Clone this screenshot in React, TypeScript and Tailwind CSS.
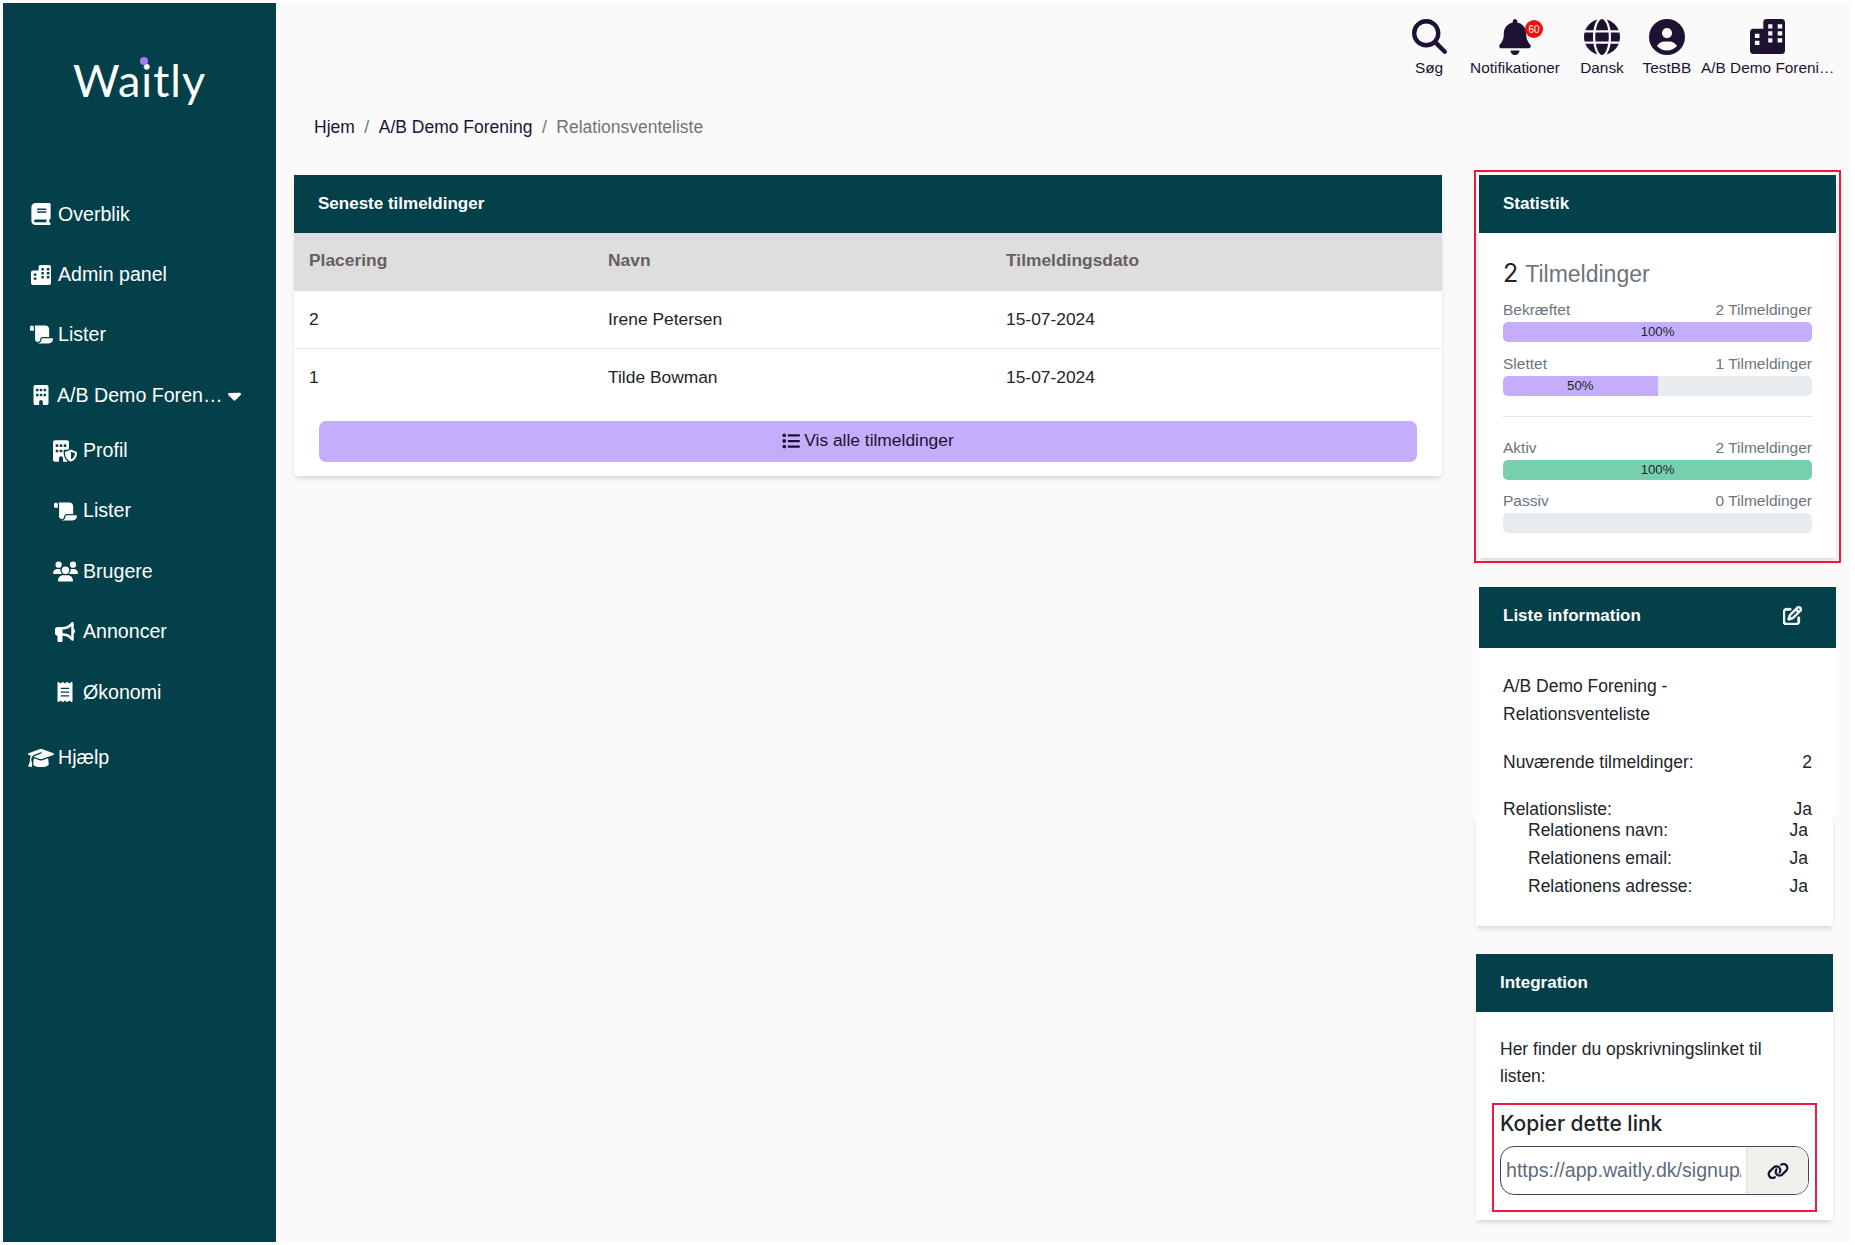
import { FaBook, FaScroll, FaBuilding, FaBuildingShield, FaUsers, FaBullhorn, FaReceipt, FaGraduationCap, FaMagnifyingGlass, FaBell, FaGlobe, FaCircleUser, FaRegPenToSquare, FaLink, FaList, FaCaretDown } from 'react-icons/fa6';

// two block building used for admin panel and the association menu
const CityIcon = ({ className }: { className: string }) => (
  <svg viewBox="0 0 100 100" className={className} fill="currentColor">
    <path
      fillRule="evenodd"
      d="M38 9Q38 0 47 0H90Q100 0 100 10V90Q100 100 90 100H10Q0 100 0 90V38Q0 28 10 28H38ZM52 15V27H64V15ZM79 15V27H92V15ZM52 35V47H64V35ZM79 35V47H92V35ZM52 55V67H64V55ZM79 55V67H92V55ZM14 42V54H27V42ZM14 62V74H27V62Z"
    />
  </svg>
);

const topItems = [
  { label: 'Søg', icon: <FaMagnifyingGlass className="text-[35px]" />, w: 'w-[66px]', text: 'text-center' },
  { label: 'Notifikationer', icon: <FaBell className="text-[36px]" />, w: 'w-[106px]', text: 'text-center', badge: true },
  { label: 'Dansk', icon: <FaGlobe className="text-[36px]" />, w: 'w-[68px]', text: 'text-center' },
  { label: 'TestBB', icon: <FaCircleUser className="text-[36px]" />, w: 'w-[62px]', text: 'text-center' },
  { label: 'A/B Demo Foreningen', icon: <CityIcon className="w-[35px] h-[35px]" />, w: 'w-[138px]', text: 'pl-[3px]' },
];

const Row = ({ icon, label, sub }: { icon: React.ReactNode; label: string; sub?: boolean }) => (
  <div className={`flex items-center h-[60.4px] text-[19.6px] text-white ${sub ? 'pl-[49px]' : 'pl-[25px]'}`}>
    <span className={`w-[26px] flex justify-center ${sub ? 'mr-[5px]' : 'mr-[4px]'}`}>{icon}</span>
    {label}
  </div>
);

const CardHead = ({ title }: { title: string }) => (
  <div className="h-[58px] bg-[#03404a] text-white font-bold text-[17px] pl-6 flex items-center">
    {title}
  </div>
);

const Stat = ({ label, count, pct, color }: { label: string; count: number; pct: number; color: string }) => (
  <div className="mb-[10.5px]">
    <div className="flex justify-between text-[15.5px] leading-[22px] text-[#6c757d]">
      <span>{label}</span>
      <span>{count} Tilmeldinger</span>
    </div>
    <div className="h-5 mt-[1px] rounded-[5px] bg-[#e9ecef] overflow-hidden flex">
      {pct > 0 && (
        <div className={`${color} flex items-center justify-center text-[13.2px] text-[#212529]`} style={{ width: `${pct}%` }}>
          {pct}%
        </div>
      )}
    </div>
  </div>
);

const InfoRow = ({ label, value, indent }: { label: string; value: string; indent?: boolean }) => (
  <div className={`flex justify-between ${indent ? 'pl-[28px] pr-[1px] leading-[28.2px]' : 'leading-[28px]'}`}>
    <span>{label}</span>
    <span>{value}</span>
  </div>
);

const tableCols = 'grid grid-cols-[299px_398px_1fr] pl-[15px] items-center text-[17.4px]';

export default function App() {
  return (
    <div className="h-[1245px] w-[1855px] overflow-hidden bg-white pl-[3px] pt-[3px] flex font-['Liberation_Sans',Arial,sans-serif] text-[#212529]">
      {/* sidebar */}
      <aside className="w-[273px] h-[1239px] shrink-0 bg-[#03404a]">
        <div className="h-[181px] flex justify-center pt-[47px]">
          <div className="relative text-white text-[45px] leading-[60px] font-['Lato',sans-serif] tracking-[1px]">
            Waitly
            <span className="absolute left-[67px] top-[7px] w-[8px] h-[8px] rounded-full bg-[#a77bf3]" />
          </div>
        </div>
        <Row icon={<FaBook className="text-[22px]" />} label="Overblik" />
        <Row icon={<CityIcon className="w-[20px] h-[20px]" />} label="Admin panel" />
        <Row icon={<FaScroll className="text-[23px]" />} label="Lister" />
        <div className="flex items-center h-[60.4px] text-[19.6px] text-white pl-[27px]">
          <span className="w-[22px] flex justify-center text-[20px] mr-[5px]"><FaBuilding /></span>
          <span>A/B Demo Foren…</span>
          <FaCaretDown className="ml-[1px] text-[21px]" />
        </div>
        <div className="-mt-[5px]">
          <Row sub icon={<FaBuildingShield className="text-[24px]" />} label="Profil" />
          <Row sub icon={<FaScroll className="text-[23px]" />} label="Lister" />
          <Row sub icon={<FaUsers className="text-[25px]" />} label="Brugere" />
          <Row sub icon={<FaBullhorn className="text-[20px]" />} label="Annoncer" />
          <Row sub icon={<FaReceipt className="text-[20px]" />} label="Økonomi" />
        </div>
        <div className="mt-[5px]">
          <Row icon={<FaGraduationCap className="text-[26px]" />} label="Hjælp" />
        </div>
      </aside>

      {/* main */}
      <main className="w-[1574px] h-[1239px] bg-[#fafafa] pl-[18px]">
        <div className="h-[87px] flex justify-end pr-[14px] pt-[16px] text-[#1e1232]">
          {topItems.map((t) => (
            <div key={t.label} className={`${t.w} flex flex-col items-center`}>
              <div className="relative h-[36px]">
                {t.icon}
                {t.badge && (
                  <span className="absolute -right-[10px] top-[1px] w-[18px] h-[18px] rounded-full bg-[#f40d0d] text-white text-[10px] flex items-center justify-center">60</span>
                )}
              </div>
              <div className={`mt-[2px] text-[15.4px] leading-[22px] w-full truncate ${t.text}`}>{t.label}</div>
            </div>
          ))}
        </div>
        <div className="h-[85px] pl-5 pt-[24px] text-[17.5px] leading-[27px] flex gap-[9.5px] text-[#1e1232]">
          <span>Hjem</span>
          <span className="text-[#6c757d]">/</span>
          <span>A/B Demo Forening</span>
          <span className="text-[#6c757d]">/</span>
          <span className="text-[#6c757d]">Relationsventeliste</span>
        </div>

        <div className="flex gap-[37px] items-start">
          <section className="w-[1148px] bg-white shadow-md rounded-b-[4px]">
            <CardHead title="Seneste tilmeldinger" />
            <div className={`${tableCols} h-[58px] pb-[3px] bg-[#dedede] font-bold text-[#665f5f]`}>
              <span>Placering</span><span>Navn</span><span>Tilmeldingsdato</span>
            </div>
            <div className={`${tableCols} h-[58px] border-b border-[#e5e7eb]`}>
              <span>2</span><span>Irene Petersen</span><span>15-07-2024</span>
            </div>
            <div className={`${tableCols} h-[58px] pb-[2px]`}>
              <span>1</span><span>Tilde Bowman</span><span>15-07-2024</span>
            </div>
            <div className="px-[25px] pt-[14px] pb-[14px]">
              <button className="w-full h-[41px] rounded-[7px] bg-[#c4aefc] text-[#1e1232] text-[17.4px] pb-[2px] flex items-center justify-center gap-[4px]">
                <FaList className="text-[18px]" /> Vis alle tilmeldinger
              </button>
            </div>
          </section>

          <div className="w-[357px] shrink-0">
            <section className="bg-white shadow-md outline-[2.5px] outline-[#ee1a3c] outline-offset-[3px] h-[383px]">
              <CardHead title="Statistik" />
              <div className="px-6 pt-[25px]">
                <div className="text-[23px] leading-[30px] mb-[10px] text-[#6c757d]">
                  <span className="text-[#212529] text-[25px] mr-[1px] font-['Inter',sans-serif]">2</span> Tilmeldinger
                </div>
                <Stat label="Bekræftet" count={2} pct={100} color="bg-[#c4aefc]" />
                <Stat label="Slettet" count={1} pct={50} color="bg-[#c4aefc]" />
                <div className="border-t border-[#e3e5e8] mt-[20px] mb-[20px]" />
                <Stat label="Aktiv" count={2} pct={100} color="bg-[#76d0ae]" />
                <Stat label="Passiv" count={0} pct={0} color="" />
              </div>
            </section>

            <section className="mt-[29px] bg-white h-[229px]">
              <div className="h-[61px] pb-[4px] bg-[#03404a] text-white font-bold text-[17px] pl-6 pr-[34px] flex items-center justify-between">
                <span>Liste information</span>
                <FaRegPenToSquare className="text-[19px] stroke-[24]" />
              </div>
              <div className="px-6 pt-[24px] text-[17.5px]">
                <div className="leading-[28px]">A/B Demo Forening -<br />Relationsventeliste</div>
                <div className="mt-[20px]"><InfoRow label="Nuværende tilmeldinger:" value="2" /></div>
                <div className="mt-[19px]"><InfoRow label="Relationsliste:" value="Ja" /></div>
              </div>
            </section>
            <section className="-ml-[3px] w-[357px] h-[110px] bg-white shadow-md px-6 text-[17.5px]">
              <InfoRow indent label="Relationens navn:" value="Ja" />
              <InfoRow indent label="Relationens email:" value="Ja" />
              <InfoRow indent label="Relationens adresse:" value="Ja" />
            </section>

            <section className="-ml-[3px] w-[357px] mt-[28px] h-[266px] bg-white shadow-md">
              <CardHead title="Integration" />
              <div className="px-6 pt-[24px] text-[17.5px]">
                <div className="leading-[27px] max-w-[280px]">Her finder du opskrivningslinket til listen:</div>
                <div className="-mx-2 mt-[13px] h-[109px] border-2 border-[#ee1a3c] px-[6px] pt-[4px]">
                  <div className="text-[21px] leading-[30px] font-medium font-['Inter',sans-serif]">Kopier dette link</div>
                  <div className="mt-[7px] h-[49px] rounded-[14px] border border-[#4a4458] flex overflow-hidden">
                    <input readOnly value="https://app.waitly.dk/signup/relation" className="w-[245px] pl-[5px] pr-[5px] text-[19.6px] text-[#5c6b80] outline-none" />
                    <div className="flex-1 bg-[#efefeb] border-l border-[#dfdfda] flex items-center justify-center text-[#1e1232] text-[22px]"><FaLink /></div>
                  </div>
                </div>
              </div>
            </section>
          </div>
        </div>
      </main>
    </div>
  );
}
